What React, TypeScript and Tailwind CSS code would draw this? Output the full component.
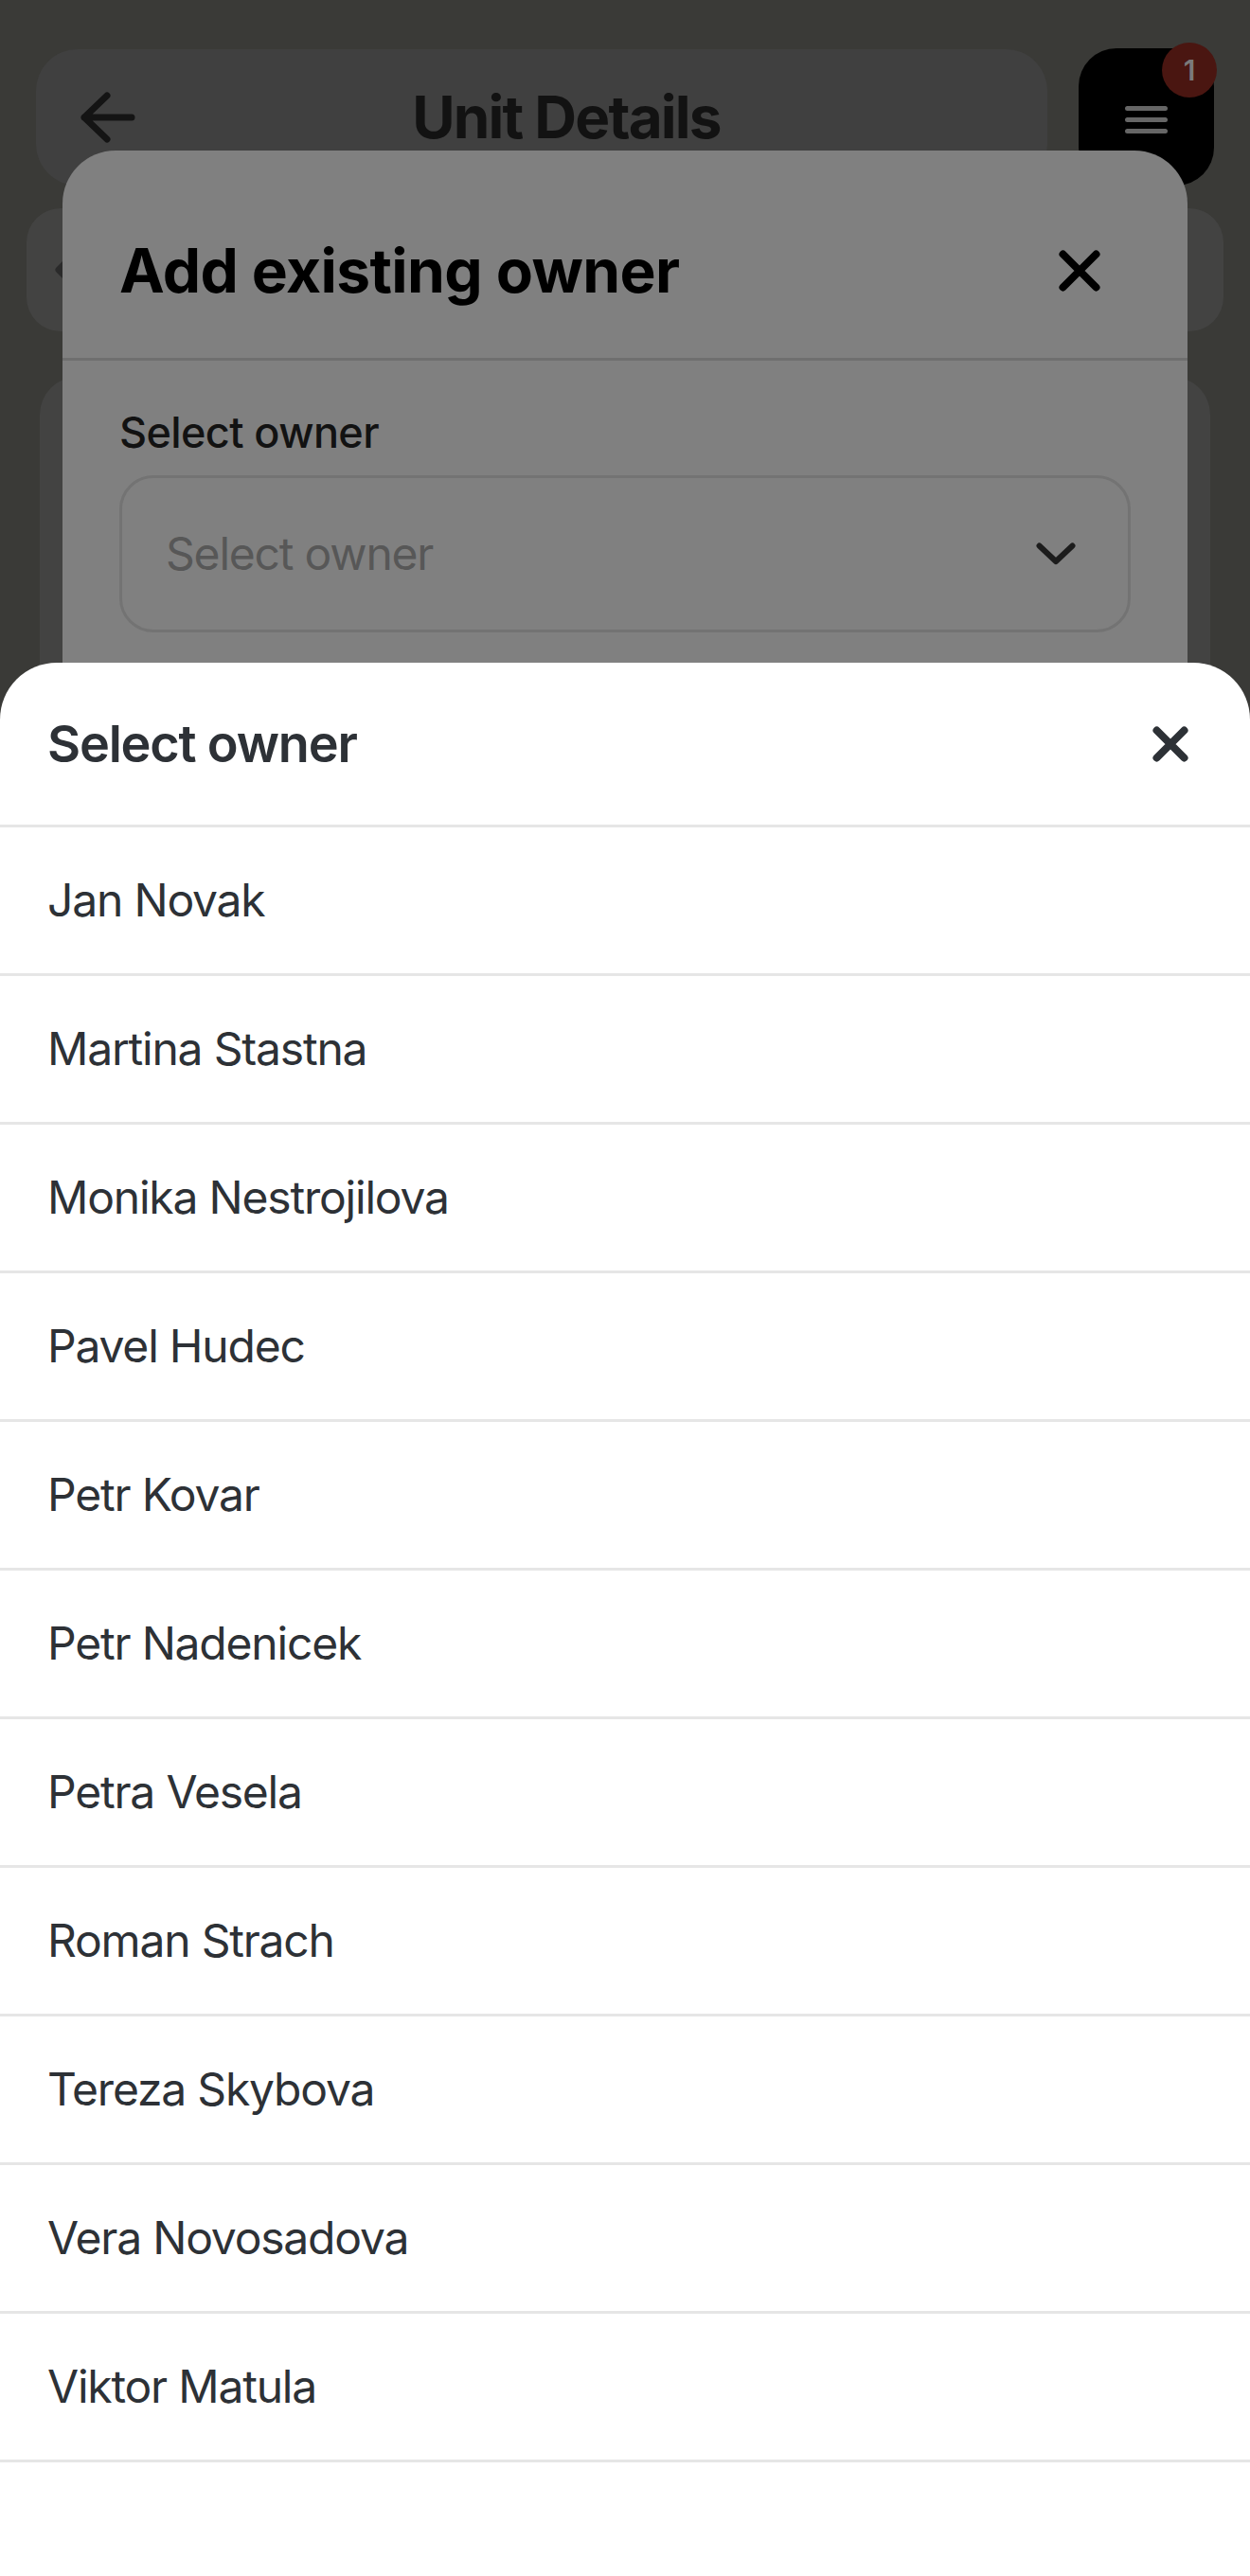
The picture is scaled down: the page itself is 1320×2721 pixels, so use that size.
import * as React from "react";

const owners = [
  "Jan Novak",
  "Martina Stastna",
  "Monika Nestrojilova",
  "Pavel Hudec",
  "Petr Kovar",
  "Petr Nadenicek",
  "Petra Vesela",
  "Roman Strach",
  "Tereza Skybova",
  "Vera Novosadova",
  "Viktor Matula",
];

// X drawn corner to corner, caps included in the box
function CloseIcon({ size, stroke, color }: { size: number; stroke: number; color: string }) {
  const p = stroke / 2 + 0.5;
  return (
    <svg width={size} height={size} viewBox={`0 0 ${size} ${size}`} fill="none">
      <path
        d={`M${p} ${p}L${size - p} ${size - p}M${size - p} ${p}L${p} ${size - p}`}
        stroke={color}
        strokeWidth={stroke}
        strokeLinecap="round"
      />
    </svg>
  );
}

/**
 * Page behind both overlays (already dimmed)
 */
function UnitPage() {
  return (
    <div className="flex flex-col px-[38px] pt-[51px]">
      <div className="flex items-start gap-[33px]">
        <div className="mt-[1px] flex h-[144px] flex-1 items-center rounded-[44px] bg-[#404040] pl-[46px] pr-[54px]">
          <svg width="60" height="56" viewBox="0 0 60 56" fill="none" className="shrink-0">
            <path d="M29 5L5 28L29 51M5 28H55" stroke="#141414" strokeWidth="7" strokeLinecap="round" strokeLinejoin="round" />
          </svg>
          <span className="flex-1 text-center text-[62px] font-bold leading-none tracking-[-1.8px] text-[#121212]">
            Unit Details
          </span>
        </div>
        <div className="relative flex h-[145px] w-[143px] shrink-0 items-center justify-center rounded-[40px] bg-black">
          <div className="mt-[6px] flex flex-col gap-[7px]">
            <div className="h-[5px] w-[45px] rounded-full bg-[#666666]" />
            <div className="h-[5px] w-[45px] rounded-full bg-[#666666]" />
            <div className="h-[5px] w-[45px] rounded-full bg-[#666666]" />
          </div>
          <div className="absolute -right-[3px] -top-[6px] flex h-[58px] w-[58px] items-center justify-center rounded-full bg-[#4a1611] text-[30px] font-semibold text-[#7a7a7a]">
            1
          </div>
        </div>
      </div>

      <div className="-mx-[10px] mt-[24px] flex h-[130px] items-center rounded-[36px] bg-[#434342] pl-[30px]">
        <svg width="24" height="40" viewBox="0 0 24 40" fill="none">
          <path d="M20 4L4 20L20 36" stroke="#2a2a2a" strokeWidth="7" strokeLinecap="round" strokeLinejoin="round" />
        </svg>
      </div>

      <div className="mx-[4px] mt-[48px] h-[500px] rounded-[40px] bg-[#434342]" />
    </div>
  );
}

/**
 * "Add existing owner" dialog, dimmed by the sheet's backdrop
 */
function AddOwnerModal() {
  return (
    <div className="absolute left-[66px] top-[159px] h-[700px] w-[1188px] rounded-t-[56px] bg-[#808080]">
      <div className="flex items-center justify-between border-b-[3px] border-[#6f6f6f] pb-[60px] pl-[60px] pr-[92px] pt-[95px]">
        <span className="text-[64px] font-bold leading-none tracking-[-0.6px] text-black">Add existing owner</span>
        <CloseIcon size={44} stroke={8} color="#000" />
      </div>
      <div className="px-[60px] pt-[53px]">
        <div className="text-[45px] font-medium leading-none tracking-[-0.6px] text-[#121212]">Select owner</div>
        <div className="mt-[23px] flex h-[166px] items-center justify-between rounded-[36px] border-[3px] border-[#737373] pl-[46px] pr-[55px]">
          <span className="text-[48px] leading-none tracking-[-1.2px] text-[#575757]">Select owner</span>
          <svg width="42" height="24" viewBox="0 0 42 24" fill="none">
            <path d="M3.5 3.5L21 20L38.5 3.5" stroke="#1c1c1c" strokeWidth="6" strokeLinecap="round" strokeLinejoin="round" />
          </svg>
        </div>
      </div>
    </div>
  );
}

function OwnerSheet() {
  return (
    <div className="absolute bottom-0 left-0 right-0 top-[700px] rounded-t-[60px] bg-white">
      <div className="flex h-[174px] items-center justify-between border-b-[3px] border-[#e6e6e6] pl-[50px] pr-[65px]">
        <span className="text-[54px] font-semibold leading-none tracking-[-1.2px] text-[#2d3136]">Select owner</span>
        <CloseIcon size={38} stroke={8} color="#2d3136" />
      </div>
      {owners.map((name) => (
        <div key={name} className="flex h-[157px] items-center border-b-[3px] border-[#e6e6e6] pl-[50px]">
          <span className="text-[48px] leading-none tracking-[-1.2px] text-[#2d3136]">{name}</span>
        </div>
      ))}
    </div>
  );
}

export default function App() {
  return (
    <div className="relative h-[2721px] w-[1320px] overflow-hidden bg-[#3a3a37] [font-family:Inter,sans-serif]">
      <UnitPage />
      <AddOwnerModal />
      <OwnerSheet />
    </div>
  );
}
